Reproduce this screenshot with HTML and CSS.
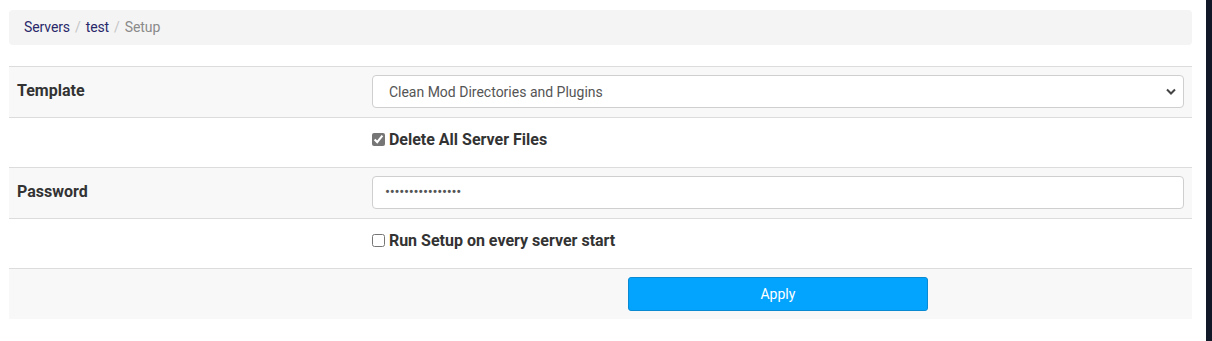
FILE: index.html
```html
<!DOCTYPE html>
<html>
<head>
    <link rel="stylesheet" href="styles.css">
</head>
<body>
    <div class="page">
        <div class="main">
            <nav class="breadcrumb">
                <a href="#">Servers</a>
                <span class="sep">/</span>
                <a href="#">test</a>
                <span class="sep">/</span>
                <span class="current">Setup</span>
            </nav>
            <form id="setupForm">
                <table class="setup-table">
                    <tr class="striped">
                        <th>Template</th>
                        <td class="input-cell">
                            <select class="control">
                                <option>Clean Mod Directories and Plugins</option>
                            </select>
                        </td>
                    </tr>
                    <tr>
                        <th></th>
                        <td class="check-cell">
                            <label class="check">
                                <input type="checkbox" checked>
                                Delete All Server Files
                            </label>
                        </td>
                    </tr>
                    <tr class="striped">
                        <th>Password</th>
                        <td class="input-cell">
                            <input type="password" class="control" value="1234567890123456">
                        </td>
                    </tr>
                    <tr>
                        <th></th>
                        <td class="check-cell">
                            <label class="check">
                                <input type="checkbox">
                                Run Setup on every server start
                            </label>
                        </td>
                    </tr>
                    <tr class="striped last">
                        <th></th>
                        <td class="actions">
                            <button type="button">Apply</button>
                        </td>
                    </tr>
                </table>
            </form>
        </div>
        <div class="edge"></div>
    </div>
</body>
</html>
```

FILE: styles.css
```css
body {
    margin: 0;
    font-family: Roboto, "Liberation Sans", sans-serif;
    color: #333;
    background: #fff;
}

.page {
    display: flex;
    height: 100vh;
}

.main {
    flex: 1;
    padding: 10px 14px 0 9px;
}

.edge {
    width: 6px;
    background-color: #111827;
}

/* Breadcrumb */
.breadcrumb {
    background-color: #f4f4f4;
    border-radius: 4px;
    height: 34px;
    padding: 0 15px 1px;
    display: flex;
    align-items: center;
    gap: 5px;
    font-size: 14px;
    letter-spacing: -0.1px;
}

.breadcrumb a {
    color: #29286b;
    text-decoration: none;
}

.breadcrumb .sep {
    color: #c4c4c4;
}

.breadcrumb .current {
    color: #8a8a8a;
}

/* Table */
.setup-table {
    width: 100%;
    margin-top: 21px;
    border-collapse: collapse;
}

.setup-table tr {
    height: 50px;
}

.setup-table tr.striped {
    height: 51px;
}

.setup-table tr.last {
    height: 50px;
}

.setup-table th,
.setup-table td {
    padding: 8px;
    border-top: 1px solid #dcdcdc;
    vertical-align: middle;
}

.setup-table th {
    width: 30%;
    padding-top: 6px;
    padding-bottom: 10px;
    text-align: left;
    font-size: 16px;
    font-weight: bold;
    color: #333;
}

.setup-table td.input-cell {
    vertical-align: top;
}

.setup-table td.check-cell {
    padding-top: 5px;
    padding-bottom: 11px;
}

.striped {
    background-color: #f8f8f8;
}

.control {
    box-sizing: border-box;
    display: block;
    width: 100%;
    height: 33px;
    padding: 0 16px;
    border: 1px solid #cfcfcf;
    border-radius: 4px;
    background-color: #fff;
    font-family: Roboto, "Liberation Sans", sans-serif;
    font-size: 14px;
    color: #555;
}

select.control {
    appearance: none;
    background-image: url("data:image/svg+xml,%3Csvg xmlns='http://www.w3.org/2000/svg' width='10' height='7' viewBox='0 0 10 7'%3E%3Cpath d='M1 1.5l4 4 4-4' fill='none' stroke='%23444' stroke-width='2'/%3E%3C/svg%3E");
    background-repeat: no-repeat;
    background-position: right 7px center;
}

input[type="password"].control {
    padding-left: 12px;
    padding-bottom: 2px;
    font-size: 15px;
    letter-spacing: -0.3px;
}

.check {
    display: flex;
    align-items: center;
    font-size: 16px;
    font-weight: bold;
    color: #333;
}

.check input {
    width: 13px;
    height: 13px;
    margin: 0 4px 0 0;
    accent-color: #767676;
}

.actions {
    text-align: center;
}

.actions button {
    width: 300px;
    height: 34px;
    background-color: #03a4fe;
    border: 1px solid #0a8ad2;
    border-radius: 3px;
    color: #fff;
    font-family: Roboto, "Liberation Sans", sans-serif;
    font-size: 14px;
    cursor: pointer;
}
```
